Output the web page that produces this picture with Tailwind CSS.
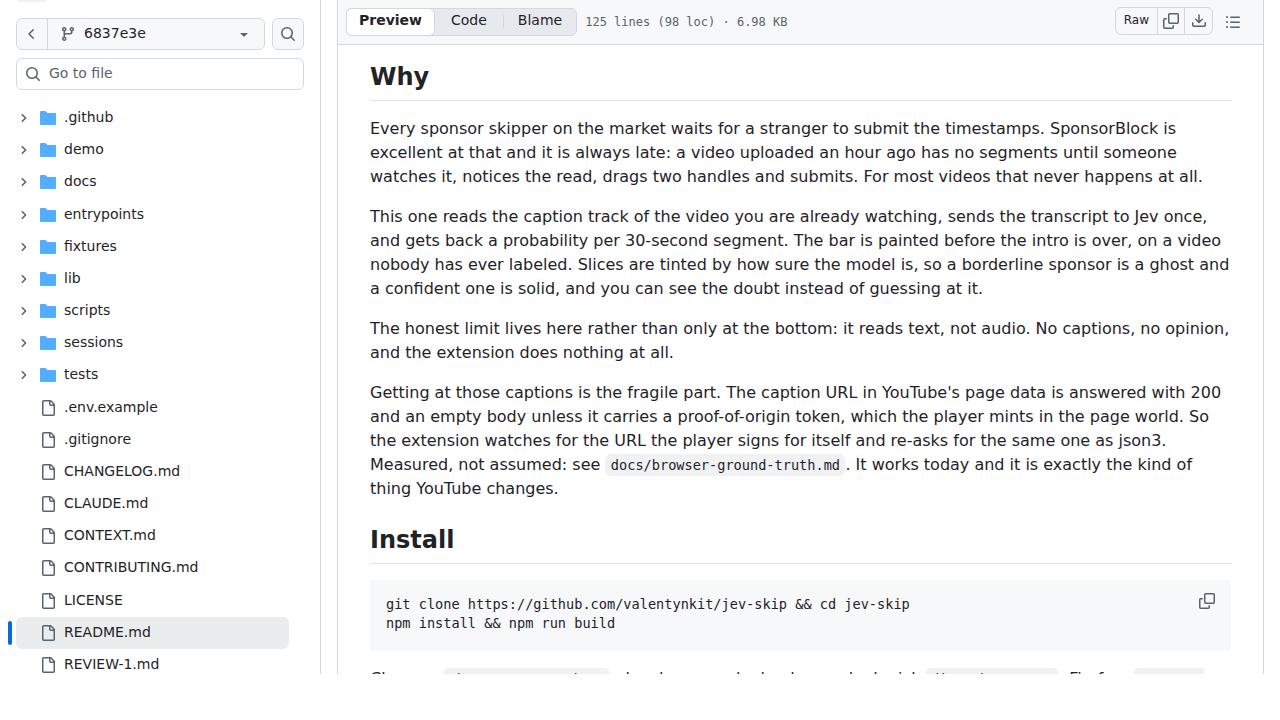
<!DOCTYPE html>
<html lang="en">
<head>
    <meta charset="UTF-8">
    <meta name="viewport" content="width=device-width, initial-scale=1.0">
    <title>jev-skip/README.md</title>
    <script src="https://cdn.jsdelivr.net/npm/@tailwindcss/browser@4"></script>
</head>
<body class="bg-white font-['DejaVu_Sans',sans-serif] text-[#1f2328]">
    <!-- icons -->
    <svg class="hidden">
        <symbol id="chevron-left" viewBox="0 0 16 16"><path d="M9.78 12.78a.75.75 0 0 1-1.06 0L4.47 8.53a.75.75 0 0 1 0-1.06l4.25-4.25a.751.751 0 0 1 1.042.018.751.751 0 0 1 .018 1.042L6.06 8l3.72 3.72a.75.75 0 0 1 0 1.06Z"/></symbol>
        <symbol id="chevron-right" viewBox="0 0 12 12"><path d="M4.3 2.7 7.6 6 4.3 9.3" fill="none" stroke="#59636e" stroke-width="1.6" stroke-linecap="round" stroke-linejoin="round"/></symbol>
        <symbol id="branch" viewBox="0 0 16 16"><path d="M9.5 3.25a2.25 2.25 0 1 1 3 2.122V6A2.5 2.5 0 0 1 10 8.5H6a1 1 0 0 0-1 1v1.128a2.251 2.251 0 1 1-1.5 0V5.372a2.25 2.25 0 1 1 1.5 0v1.836A2.493 2.493 0 0 1 6 7h4a1 1 0 0 0 1-1v-.628A2.25 2.25 0 0 1 9.5 3.25Zm-6 0a.75.75 0 1 0 1.5 0 .75.75 0 0 0-1.5 0Zm8.25-.75a.75.75 0 1 0 0 1.5.75.75 0 0 0 0-1.5ZM4.25 12a.75.75 0 1 0 0 1.5.75.75 0 0 0 0-1.5Z"/></symbol>
        <symbol id="triangle" viewBox="0 0 16 16"><path d="m4.427 7.427 3.396 3.396a.25.25 0 0 0 .354 0l3.396-3.396A.25.25 0 0 0 11.396 7H4.604a.25.25 0 0 0-.177.427Z"/></symbol>
        <symbol id="search" viewBox="0 0 16 16"><path d="M10.68 11.74a6 6 0 0 1-7.922-8.982 6 6 0 0 1 8.982 7.922l3.04 3.04a.749.749 0 0 1-.326 1.275.749.749 0 0 1-.734-.215ZM11.5 7a4.499 4.499 0 1 0-8.997 0A4.499 4.499 0 0 0 11.5 7Z"/></symbol>
        <symbol id="folder" viewBox="0 0 16 16"><path d="M1 1A1 1 0 0 0 0 2v12a1 1 0 0 0 1 1h14a1 1 0 0 0 1-1V4a1 1 0 0 0-1-1H7.5a.25.25 0 0 1-.2-.1l-.9-1.2C6.07 1.26 5.55 1 5 1H1Z"/></symbol>
        <symbol id="file" viewBox="0 0 16 16"><path d="M2 1.75C2 .784 2.784 0 3.75 0h6.586c.464 0 .909.184 1.237.513l2.914 2.914c.329.328.513.773.513 1.237v9.586A1.75 1.75 0 0 1 13.25 16h-9.5A1.75 1.75 0 0 1 2 14.25Zm1.75-.25a.25.25 0 0 0-.25.25v12.5c0 .138.112.25.25.25h9.5a.25.25 0 0 0 .25-.25V6h-2.75A1.75 1.75 0 0 1 9 4.25V1.5Zm6.75.062V4.25c0 .138.112.25.25.25h2.688l-.011-.013-2.914-2.914-.013-.011Z"/></symbol>
        <symbol id="copy" viewBox="0 0 16 16"><path d="M0 6.75C0 5.784.784 5 1.75 5h1.5a.75.75 0 0 1 0 1.5h-1.5a.25.25 0 0 0-.25.25v7.5c0 .138.112.25.25.25h7.5a.25.25 0 0 0 .25-.25v-1.5a.75.75 0 0 1 1.5 0v1.5A1.75 1.75 0 0 1 9.25 16h-7.5A1.75 1.75 0 0 1 0 14.25Z"/><path d="M5 1.75C5 .784 5.784 0 6.75 0h7.5C15.216 0 16 .784 16 1.75v7.5A1.75 1.75 0 0 1 14.25 11h-7.5A1.75 1.75 0 0 1 5 9.25Zm1.75-.25a.25.25 0 0 0-.25.25v7.5c0 .138.112.25.25.25h7.5a.25.25 0 0 0 .25-.25v-7.5a.25.25 0 0 0-.25-.25Z"/></symbol>
        <symbol id="download" viewBox="0 0 16 16"><path d="M2.75 14A1.75 1.75 0 0 1 1 12.25v-2.5a.75.75 0 0 1 1.5 0v2.5c0 .138.112.25.25.25h10.5a.25.25 0 0 0 .25-.25v-2.5a.75.75 0 0 1 1.5 0v2.5A1.75 1.75 0 0 1 13.25 14Z"/><path d="M7.25 7.689V2a.75.75 0 0 1 1.5 0v5.689l1.97-1.969a.749.749 0 1 1 1.06 1.06l-3.25 3.25a.749.749 0 0 1-1.06 0L4.22 6.78a.749.749 0 1 1 1.06-1.06l1.97 1.969Z"/></symbol>
        <symbol id="list" viewBox="0 0 16 16"><path d="M5.75 2.5h8.5a.75.75 0 0 1 0 1.5h-8.5a.75.75 0 0 1 0-1.5Zm0 5h8.5a.75.75 0 0 1 0 1.5h-8.5a.75.75 0 0 1 0-1.5Zm0 5h8.5a.75.75 0 0 1 0 1.5h-8.5a.75.75 0 0 1 0-1.5ZM2 14a1 1 0 1 1 0-2 1 1 0 0 1 0 2Zm1-6a1 1 0 1 1-2 0 1 1 0 0 1 2 0ZM2 4a1 1 0 1 1 0-2 1 1 0 0 1 0 2Z"/></symbol>
    </svg>

    <div class="h-screen pb-[46px]">
        <div class="flex h-full overflow-hidden">
            <!-- file tree -->
            <aside class="w-[321px] shrink-0 border-r border-[#d1d9e0] px-4">
                <button class="-mt-[30px] block size-8 rounded-md bg-[#eff1f3]" aria-label="Collapse file tree"></button>
                <div class="mt-4 flex gap-[7px]">
                    <div class="flex h-8 flex-1 rounded-md border border-[#d1d9e0] bg-[#f6f8fa]">
                        <button class="flex w-[31px] items-center justify-center border-r border-[#d1d9e0]" aria-label="Back"><svg class="size-4 fill-[#59636e]"><use href="#chevron-left"/></svg></button>
                        <button class="flex flex-1 items-center gap-2 px-3 text-sm">
                            <svg class="size-4 fill-[#59636e]"><use href="#branch"/></svg>
                            <span class="flex-1 pb-0.5 text-left">6837e3e</span>
                            <svg class="size-4 fill-[#59636e]"><use href="#triangle"/></svg>
                        </button>
                    </div>
                    <button class="flex size-8 items-center justify-center rounded-md border border-[#d1d9e0] bg-[#f6f8fa]" aria-label="Search this repository"><svg class="size-4 fill-[#59636e]"><use href="#search"/></svg></button>
                </div>
                <label class="mt-2 flex h-8 items-center gap-2 rounded-md border border-[#d1d9e0] px-2">
                    <svg class="size-4 fill-[#59636e]"><use href="#search"/></svg>
                    <input type="text" class="min-w-0 flex-1 pb-0.5 text-sm outline-none placeholder:text-[#59636e]" placeholder="Go to file" aria-label="Go to file">
                </label>
                <ul id="tree" class="mt-3 mr-[15px] grid h-[579px] auto-rows-fr text-sm"></ul>
            </aside>

            <!-- file view -->
            <main class="mx-4 min-w-0 flex-1 border-x border-[#d1d9e0]">
                <div class="flex h-[45px] items-center border-b border-[#d1d9e0] bg-[#f6f8fa] pr-4 pb-px pl-2">
                    <div class="flex h-7 rounded-md border border-[#d1d9e0] bg-[#e6eaef] text-sm">
                        <button class="-my-px -ml-px rounded-md border border-[#d1d9e0] bg-white px-3 pb-1 font-bold">Preview</button>
                        <button class="px-4 pb-1">Code</button>
                        <span class="my-1.5 w-px bg-[#d1d9e0]"></span>
                        <button class="px-3.5 pb-1">Blame</button>
                    </div>
                    <span class="ml-2 flex-1 font-['DejaVu_Sans_Mono',monospace] text-xs text-[#59636e]">125 lines (98 loc) · 6.98 KB</span>
                    <div class="mb-0.5 flex h-7 divide-x divide-[#d1d9e0] rounded-md border border-[#d1d9e0] text-xs">
                        <button class="px-2 pb-0.5">Raw</button>
                        <button class="flex w-[27px] items-center justify-center" aria-label="Copy raw file"><svg class="size-4 fill-[#59636e]"><use href="#copy"/></svg></button>
                        <button class="flex w-[27px] items-center justify-center" aria-label="Download raw file"><svg class="size-4 fill-[#59636e]"><use href="#download"/></svg></button>
                    </div>
                    <button class="ml-1.5 flex size-7 items-center justify-center" aria-label="Outline"><svg class="size-4 fill-[#59636e]"><use href="#list"/></svg></button>
                </div>

                <article class="px-8 pt-[17px] text-base">
                    <h2 class="mb-4 border-b border-[#dfe4e9] pb-2 text-2xl leading-[30px] font-bold">Why</h2>
                    <p class="mb-4">Every sponsor skipper on the market waits for a stranger to submit the timestamps. SponsorBlock is excellent at that and it is always late: a video uploaded an hour ago has no segments until someone watches it, notices the read, drags two handles and submits. For most videos that never happens at all.</p>
                    <p class="mb-4">This one reads the caption track of the video you are already watching, sends the transcript to Jev once, and gets back a probability per 30-second segment. The bar is painted before the intro is over, on a video nobody has ever labeled. Slices are tinted by how sure the model is, so a borderline sponsor is a ghost and a confident one is solid, and you can see the doubt instead of guessing at it.</p>
                    <p class="mb-4">The honest limit lives here rather than only at the bottom: it reads text, not audio. No captions, no opinion, and the extension does nothing at all.</p>
                    <p class="mb-6">Getting at those captions is the fragile part. The caption URL in YouTube's page data is answered with 200 and an empty body unless it carries a proof-of-origin token, which the player mints in the page world. So the extension watches for the URL the player signs for itself and re-asks for the same one as json3. Measured, not assumed: see <code class="rounded-md bg-[#eff1f3] px-[.4em] py-[.2em] font-['DejaVu_Sans_Mono',monospace] text-[85%] whitespace-break-spaces">docs/browser-ground-truth.md</code>. It works today and it is exactly the kind of thing YouTube changes.</p>
                    <h2 class="mb-4 border-b border-[#dfe4e9] pb-2 text-2xl leading-[30px] font-bold">Install</h2>
                    <div class="mb-4 flex items-start justify-between bg-[#f6f8fa] px-4 pt-[15px] pb-[18px]">
                        <pre class="font-['DejaVu_Sans_Mono',monospace] text-[85%] leading-[19px]">git clone https://github.com/valentynkit/jev-skip &amp;&amp; cd jev-skip
npm install &amp;&amp; npm run build</pre>
                        <button class="-mt-2 flex h-7 w-4 items-center justify-center" aria-label="Copy"><svg class="size-4 fill-[#59636e]"><use href="#copy"/></svg></button>
                    </div>
                    <p>Chrome: <code class="rounded-md bg-[#eff1f3] px-[.4em] py-[.2em] font-['DejaVu_Sans_Mono',monospace] text-[85%] whitespace-break-spaces">chrome://extensions</code>, developer mode, load unpacked, pick <code class="rounded-md bg-[#eff1f3] px-[.4em] py-[.2em] font-['DejaVu_Sans_Mono',monospace] text-[85%] whitespace-break-spaces">dist/chrome-mv3</code>. Firefox: <code class="rounded-md bg-[#eff1f3] px-[.4em] py-[.2em] font-['DejaVu_Sans_Mono',monospace] text-[85%] whitespace-break-spaces">npm run build:firefox</code>.</p>
                </article>
            </main>
        </div>
    </div>

    <script>
        const folders = [".github", "demo", "docs", "entrypoints", "fixtures", "lib", "scripts", "sessions", "tests"];
        const files = [".env.example", ".gitignore", "CHANGELOG.md", "CLAUDE.md", "CONTEXT.md", "CONTRIBUTING.md", "LICENSE", "README.md", "REVIEW-1.md"];
        const current = "README.md";

        function folderRow(name) {
            return `<li><a href="#" class="flex h-full items-center rounded-md pl-0.5">
                <svg class="mr-2.5 size-3"><use href="#chevron-right"/></svg>
                <svg class="mr-2 size-4 fill-[#54aeff]"><use href="#folder"/></svg>
                <span class="pb-0.5">${name}</span></a></li>`;
        }

        function fileRow(name) {
            const active = name === current;
            const bar = active ? `<span class="absolute top-1 bottom-1 -left-2 w-1 rounded-md bg-[#0969da]"></span>` : "";
            return `<li class="relative">${bar}<a href="#" class="flex h-full items-center rounded-md pl-6 ${active ? "bg-[#ebecee]" : ""}">
                <svg class="mr-2 size-4 fill-[#59636e]"><use href="#file"/></svg>
                <span class="pb-0.5">${name}</span></a></li>`;
        }

        document.getElementById("tree").innerHTML = folders.map(folderRow).join("") + files.map(fileRow).join("");
    </script>
</body>
</html>
